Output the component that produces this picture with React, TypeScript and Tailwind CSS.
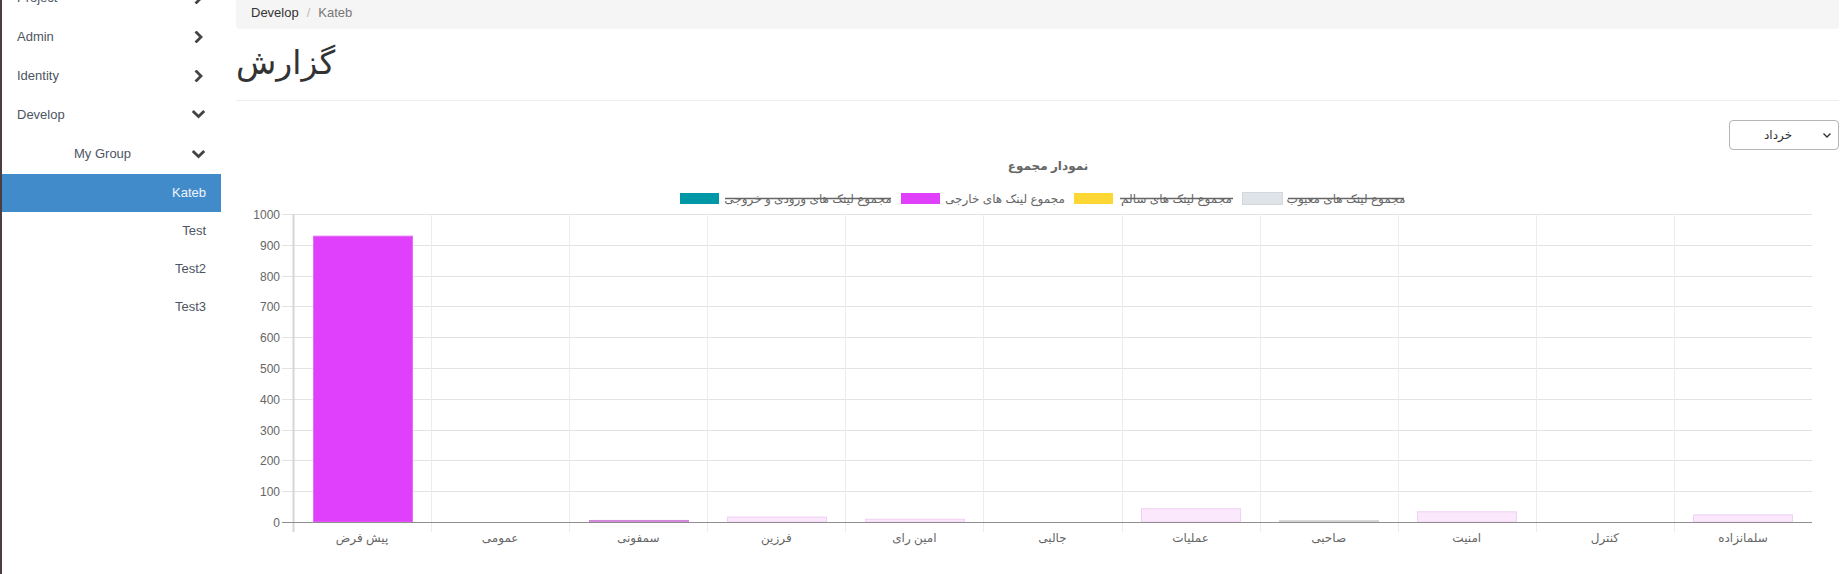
import React from 'react';

const FONT = { fontFamily: '"Liberation Sans", "DejaVu Sans", sans-serif' };

function ChevronRight() {
  return (
    <svg width="10" height="12" viewBox="0 0 10 12" className="shrink-0">
      <polyline points="2.5,1.5 7,6 2.5,10.5" fill="none" stroke="#444" strokeWidth="2.8" strokeLinecap="square" />
    </svg>
  );
}

function ChevronDown() {
  return (
    <svg width="13" height="9" viewBox="0 0 13 9" className="shrink-0">
      <polyline points="1.8,2 6.5,6.5 11.2,2" fill="none" stroke="#444" strokeWidth="2.8" strokeLinecap="square" />
    </svg>
  );
}

type NavItem = { label: string; icon?: 'right' | 'down'; h: string; indent?: boolean };

const topItems: NavItem[] = [
  { label: 'Project', icon: 'right', h: 'h-[39px]' },
  { label: 'Admin', icon: 'right', h: 'h-[39px]' },
  { label: 'Identity', icon: 'right', h: 'h-[39px]' },
  { label: 'Develop', icon: 'down', h: 'h-[39px]' },
  { label: 'My Group', icon: 'down', h: 'h-[40px]', indent: true },
];

const leaves = ['Kateb', 'Test', 'Test2', 'Test3'];

function Sidebar() {
  return (
    <aside className="w-[221px] shrink-0 border-l-2 border-[#4b3e40] min-h-[574px] bg-white">
      <ul className="-mt-[22px]">
        {topItems.map((it) => (
          <li
            key={it.label}
            className={`${it.h} flex items-center justify-between text-[13px] text-[#4d5563] pr-[16px] ${it.indent ? 'pl-[72px]' : 'pl-[15px]'}`}
          >
            <span>{it.label}</span>
            <span className="w-[13px] flex justify-center">{it.icon === 'down' ? <ChevronDown /> : <ChevronRight />}</span>
          </li>
        ))}
        {leaves.map((l) => (
          <li
            key={l}
            className={`h-[38px] flex items-center justify-end pr-[15px] text-[13px] ${l === 'Kateb' ? 'bg-[#428bca] text-[#eef4fa]' : 'text-[#4d5563]'}`}
          >
            {l}
          </li>
        ))}
      </ul>
    </aside>
  );
}

const categories = ['پیش فرض', 'عمومی', 'سمفونی', 'فرزین', 'امین رای', 'جالبی', 'عملیات', 'صاحبی', 'امنیت', 'کنترل', 'سلمانزاده'];

// value, fill, stroke
const bars: [number, string, string][] = [
  [928, '#e040fb', '#e56af9'],
  [0, 'none', 'none'],
  [5, '#d98ee0', '#cf86d6'],
  [16, '#fbe8fd', '#efcff3'],
  [9, '#fbe8fd', '#efcff3'],
  [0, 'none', 'none'],
  [43, '#fbe8fd', '#efcff3'],
  [4, '#dcdcdc', '#cfcfcf'],
  [33, '#fbe8fd', '#efcff3'],
  [0, 'none', 'none'],
  [23, '#fbe8fd', '#efcff3'],
];

const X0 = 57;
const X1 = 1576;
const CW = (X1 - X0) / 11;
const yOf = (v: number) => 368 - 0.308 * v;

function Chart() {
  const ticks = [0, 100, 200, 300, 400, 500, 600, 700, 800, 900, 1000];
  return (
    <svg width="1603" height="419" viewBox="0 0 1603 419" className="block mt-[4px]" style={FONT}>
      <text x="812" y="16" textAnchor="middle" fontSize="12" fontWeight="bold" fill="#666">
        نمودار مجموع
      </text>

      {/* legend */}
      <rect x="443.5" y="38.5" width="40" height="12" fill="#0097a7" stroke="#fff" />
      <text x="572" y="48.5" textAnchor="middle" fontSize="12" fill="#666">مجموع لینک های ورودی و خروجی</text>
      <line x1="489" y1="44.5" x2="655" y2="44.5" stroke="#666" strokeWidth="1.5" />

      <rect x="664.5" y="38.5" width="40" height="12" fill="#e040fb" stroke="#fff" />
      <text x="769" y="48.5" textAnchor="middle" fontSize="12" fill="#666">مجموع لینک های خارجی</text>

      <rect x="837.5" y="38.5" width="40" height="12" fill="#fdd835" stroke="#fff" />
      <text x="940.5" y="48.5" textAnchor="middle" fontSize="12" fill="#666">مجموع لینک های سالم</text>
      <line x1="884" y1="44.5" x2="997" y2="44.5" stroke="#666" strokeWidth="1.5" />

      <rect x="1006.5" y="38.5" width="40" height="12" fill="#dfe4e8" stroke="#d2d8dd" />
      <text x="1110" y="48.5" textAnchor="middle" fontSize="12" fill="#666">مجموع لینک های معیوب</text>
      <line x1="1052" y1="44.5" x2="1168" y2="44.5" stroke="#666" strokeWidth="1.5" />

      {/* horizontal grid */}
      {ticks.map((t) => (
        <g key={t}>
          <line
            x1="46"
            x2={X1}
            y1={Math.round(yOf(t)) + 0.5}
            y2={Math.round(yOf(t)) + 0.5}
            stroke={t === 0 ? '#8f8f8f' : '#e3e3e3'}
            strokeWidth="1"
          />
          <text x="44" y={Math.round(yOf(t)) + 4.5} textAnchor="end" fontSize="12" fill="#666">
            {t}
          </text>
        </g>
      ))}

      {/* vertical grid */}
      {Array.from({ length: 11 }).map((_, i) => (
        <line
          key={i}
          x1={Math.round(X0 + CW * i) + 0.5}
          x2={Math.round(X0 + CW * i) + 0.5}
          y1="60"
          y2="378"
          stroke={i === 0 ? '#d6d6d6' : '#ececec'}
          strokeWidth={i === 0 ? 2 : 1}
        />
      ))}

      {/* bars */}
      {bars.map(([v, fill, stroke], i) => {
        if (v === 0) return null;
        const cx = X0 + CW * (i + 0.5);
        const top = yOf(v);
        return (
          <rect
            key={i}
            x={Math.round(cx - 49.5) + 0.5}
            y={top}
            width="99"
            height={368 - top}
            fill={fill}
            stroke={stroke}
            strokeWidth="1"
          />
        );
      })}
      <line x1="46" x2={X1} y1="368.5" y2="368.5" stroke="#8f8f8f" strokeWidth="1" />

      {/* x labels */}
      {categories.map((c, i) => (
        <text key={c} x={X0 + CW * (i + 0.5)} y="388" textAnchor="middle" fontSize="12" fill="#666">
          {c}
        </text>
      ))}
    </svg>
  );
}

export default function App() {
  return (
    <div className="flex w-[1846px] h-[574px] overflow-hidden bg-white" style={FONT}>
      <Sidebar />
      <main className="ml-[15px] w-[1603px] shrink-0 flex flex-col">
        <div className="h-[29px] bg-[#f5f5f5] rounded-b-[4px] px-[15px] flex items-center pb-[3px] text-[13px]">
          <span className="text-[#333]">Develop</span>
          <span className="text-[#bbb] px-[8px]">/</span>
          <span className="text-[#777]">Kateb</span>
        </div>
        <div className="h-[72px] flex items-center border-b border-[#eeeeee]">
          <h1 className="text-[33px] leading-none text-[#333] pb-[4px]" style={{ fontFamily: '"DejaVu Sans", sans-serif' }}>
            گزارش
          </h1>
        </div>
        <div className="flex justify-end mt-[19px]">
          <div className="w-[110px] h-[30px] border border-[#b5b5b5] rounded-[4px] flex items-center justify-between pl-[34px] pr-[6px] bg-white">
            <span className="text-[12px] text-[#333]">خرداد</span>
            <svg width="10" height="7" viewBox="0 0 10 7">
              <polyline points="1.5,1.5 5,5 8.5,1.5" fill="none" stroke="#333" strokeWidth="1.4" />
            </svg>
          </div>
        </div>
        <Chart />
      </main>
    </div>
  );
}
